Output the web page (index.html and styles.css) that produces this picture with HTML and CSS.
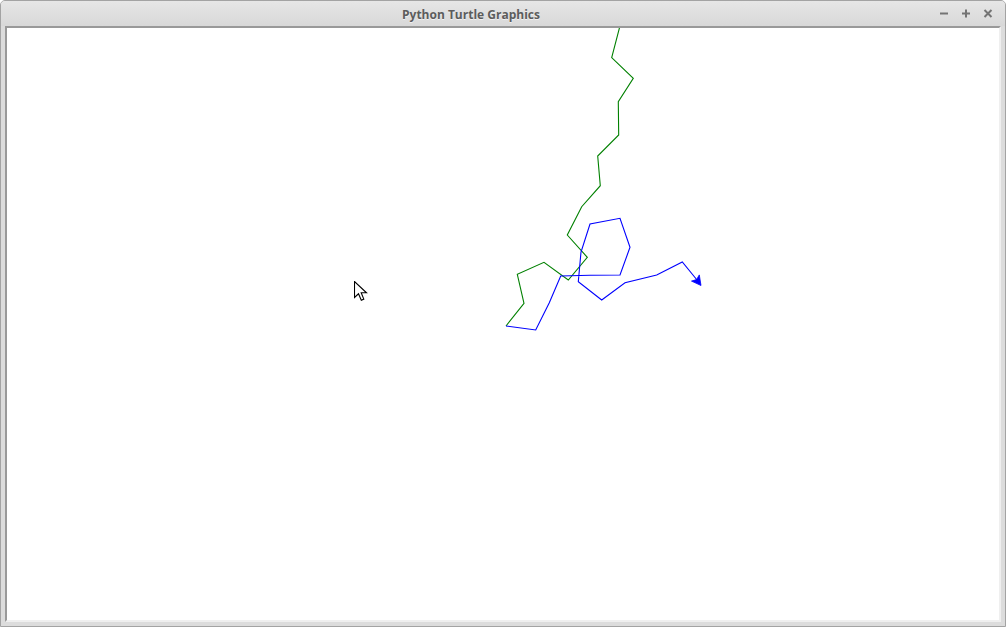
FILE: index.html
```html
<!DOCTYPE html>
<html>
<head>
<meta charset="utf-8">
<title>Python Turtle Graphics</title>
<link rel="stylesheet" href="styles.css">
</head>
<body>
<div class="window">
  <div class="titlebar">
    <div class="title">Python Turtle Graphics</div>
    <div class="controls">
      <svg class="ctl" width="10" height="10" viewBox="0 0 10 10"><path d="M1 5.5H9" stroke="#747474" stroke-width="2"/></svg>
      <svg class="ctl" width="10" height="10" viewBox="0 0 10 10"><path d="M1 5.5H9M5 1.5V9.5" stroke="#747474" stroke-width="2"/></svg>
      <svg class="ctl" width="10" height="10" viewBox="0 0 10 10"><path d="M1.5 2L8.5 9M8.5 2L1.5 9" stroke="#747474" stroke-width="2"/></svg>
    </div>
  </div>
  <div class="body">
    <div class="canvas">
      <svg class="drawing" width="992" height="592" viewBox="7 28 992 592">
        <polyline fill="none" stroke="#008000" stroke-width="1.1" points="621.5,20 611.7,57.7 633.3,78.3 618.3,101.7 618.7,135 597.7,156 600.3,185.7 581.7,206.7 567.3,235 587.3,257.3 568.3,280 544,262.3 517.3,274.3 524,303.3 506,326"/>
        <polyline fill="none" stroke="#0000ff" stroke-width="1.1" points="506,326 535.7,330 549.3,302.7 560.7,276 590,275.3 620,275 630,247.3 620,218.3 590,224 581,252 578.3,281.7 601.7,300 625,282.7 656.7,275 682.3,262 699.5,283"/>
        <polygon fill="#0000ff" stroke="#0000ff" stroke-width="0.8" points="701,285.5 691.5,281.1 696.6,279.5 699.3,274.9"/>
      </svg>
      <svg class="cursor" width="14" height="22" viewBox="0 0 14 22">
        <path d="M0.5 0.5V16.5L4.5 12.8L7.3 19.2L9.8 18.1L7.2 11.8H12.5Z" fill="#ffffff" stroke="#000000" stroke-width="1.1" stroke-linejoin="miter"/>
      </svg>
    </div>
  </div>
</div>
</body>
</html>
```

FILE: styles.css
```css
html, body {
  margin: 0;
  padding: 0;
  background: #ffffff;
}

body {
  width: 1006px;
  height: 627px;
  overflow: hidden;
}

.window {
  box-sizing: border-box;
  width: 1006px;
  height: 627px;
  border: 1px solid #a3a3a3;
  border-radius: 5px 5px 0 0;
  background: #dcdcdc;
  display: flex;
  flex-direction: column;
}

.titlebar {
  height: 25px;
  flex: none;
  position: relative;
  display: flex;
  align-items: center;
  justify-content: center;
  padding-right: 64px;
  background: linear-gradient(#e6e6e6, #d8d8d8);
  border-radius: 4px 4px 0 0;
}

.title {
  font-family: "Open Sans", "Noto Sans", sans-serif;
  font-weight: 700;
  font-size: 12px;
  color: #5c5c5c;
  text-shadow: 0 1px 0 rgba(255, 255, 255, 0.6);
  margin-top: 1px;
}

.controls {
  position: absolute;
  right: 12px;
  top: 7px;
  display: flex;
  gap: 12px;
}

.ctl {
  display: block;
}

.body {
  flex: 1;
  display: flex;
  padding: 0 4px 4px 4px;
  background: #dcdcdc;
}

.canvas {
  flex: 1;
  position: relative;
  overflow: hidden;
  background: #ffffff;
  border-top: 2px solid #999999;
  border-left: 2px solid #999999;
  border-bottom: 2px solid #efefef;
  border-right: 2px solid #efefef;
}

.drawing {
  display: block;
}

.cursor {
  position: absolute;
  left: 347px;
  top: 253px;
}
```
